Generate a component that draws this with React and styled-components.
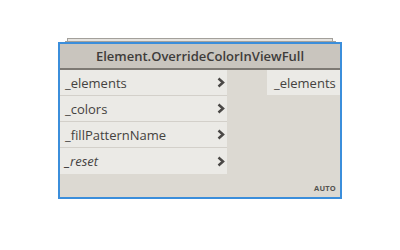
import React from "react";
import styled, { createGlobalStyle } from "styled-components";

const Global = createGlobalStyle`
  html, body { margin: 0; padding: 0; background: #ffffff; }
  body { font-family: "Open Sans", "Noto Sans", sans-serif; }
`;

const Page = styled.div`
  width: 400px;
  height: 250px;
  padding: 38px 0 0 58px;
  box-sizing: border-box;
`;

const NodeWrap = styled.div`
  width: 284px;
  display: flex;
  flex-direction: column;
`;

const StackBar = styled.div`
  height: ${(p) => p.$h}px;
  margin: 0 ${(p) => p.$right}px 0 ${(p) => p.$left}px;
  border: 1px solid #a3a09b;
  border-bottom: none;
  background: #e4e2de;
  box-sizing: border-box;
`;

const Node = styled.div`
  height: 157px;
  border: 2px solid #3b8edb;
  box-sizing: border-box;
  background: #dcd9d2;
  display: flex;
  flex-direction: column;
`;

const Header = styled.div`
  height: 26px;
  flex: none;
  background: #c9c5be;
  border-bottom: 2px solid #7d7973;
  display: flex;
  align-items: center;
  justify-content: center;
  font-size: 13px;
  font-weight: 600;
  color: #3e3c3a;
  padding-bottom: 1px;
  box-sizing: border-box;
`;

const Body = styled.div`
  flex: 1;
  display: flex;
  position: relative;
`;

const Inputs = styled.div`
  width: 167px;
  display: flex;
  flex-direction: column;
`;

const Port = styled.div`
  height: 26px;
  box-sizing: border-box;
  background: #ebeae6;
  border-bottom: ${(p) => (p.$last ? "none" : "1px solid #d3d0ca")};
  display: flex;
  align-items: center;
  justify-content: space-between;
  padding: 0 2px 0 5px;
  font-size: 13px;
  color: #444240;
  font-style: ${(p) => (p.$italic ? "italic" : "normal")};
`;

const Outputs = styled.div`
  flex: 1;
  display: flex;
  flex-direction: column;
  align-items: flex-end;
`;

const OutPort = styled.div`
  width: 73px;
  height: 25px;
  background: #ebeae6;
  display: flex;
  align-items: center;
  padding-left: 7px;
  box-sizing: border-box;
  font-size: 13px;
  color: #444240;
`;

const Auto = styled.div`
  position: absolute;
  right: 4px;
  bottom: 4px;
  font-size: 7.5px;
  font-weight: 700;
  color: #555350;
  letter-spacing: 0.2px;
`;

const Chevron = () => (
  <svg width="8" height="11" viewBox="0 0 8 11">
    <polyline
      points="1.5,1.5 6,5.5 1.5,9.5"
      fill="none"
      stroke="#4a4846"
      strokeWidth="2.5"
    />
  </svg>
);

const inputs = [
  { name: "_elements" },
  { name: "_colors" },
  { name: "_fillPatternName" },
  { name: "_reset", italic: true },
];

export default function App() {
  return (
    <>
      <Global />
      <Page>
        <NodeWrap>
          <StackBar $h={3} $left={9} $right={9} />
          <StackBar $h={1} $left={7} $right={6} />
          <Node>
            <Header>Element.OverrideColorInViewFull</Header>
            <Body>
              <Inputs>
                {inputs.map((p, i) => (
                  <Port key={p.name} $italic={p.italic} $last={i === inputs.length - 1}>
                    <span>{p.name}</span>
                    <Chevron />
                  </Port>
                ))}
              </Inputs>
              <Outputs>
                <OutPort>_elements</OutPort>
              </Outputs>
              <Auto>AUTO</Auto>
            </Body>
          </Node>
        </NodeWrap>
      </Page>
    </>
  );
}
